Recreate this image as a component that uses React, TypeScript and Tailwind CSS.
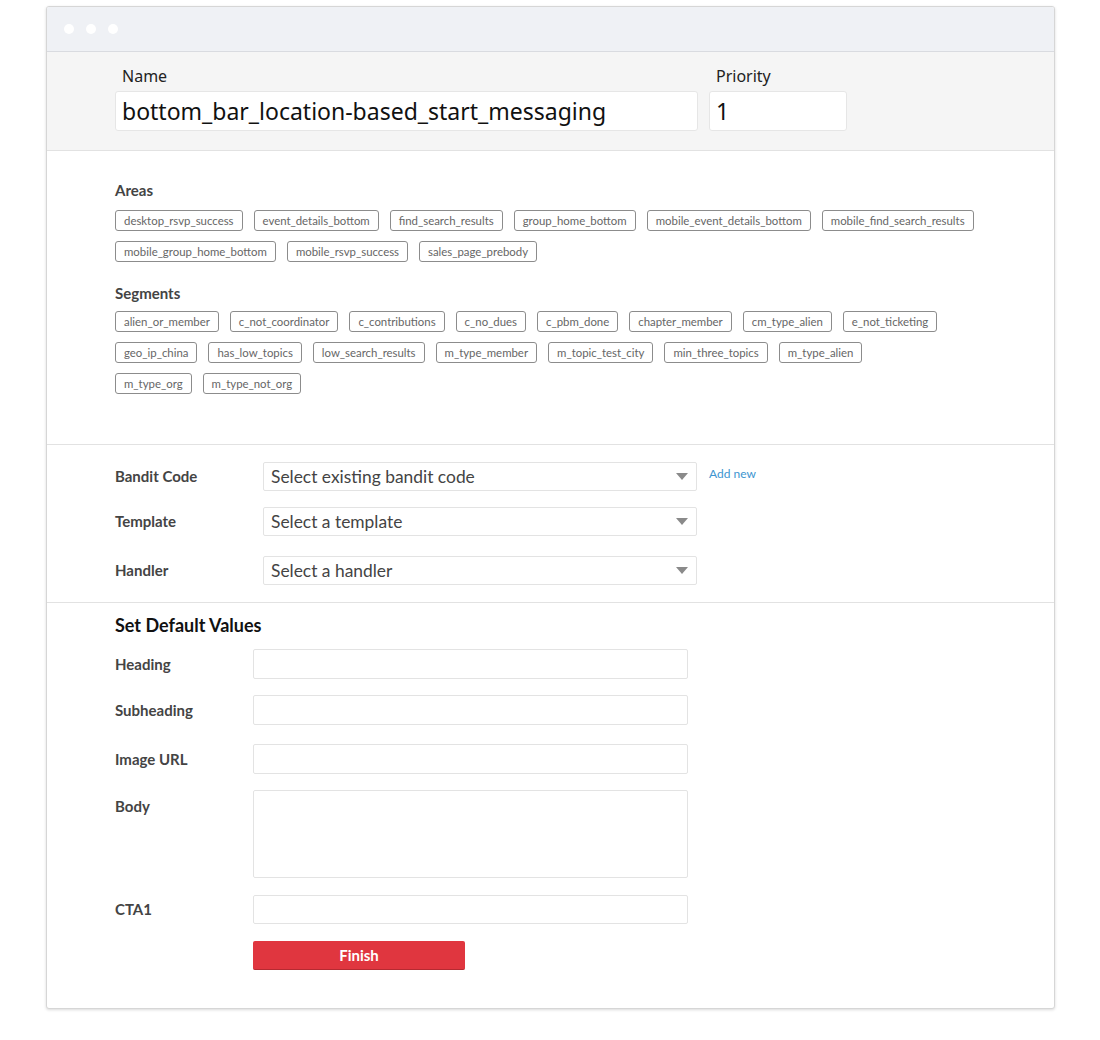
import React from "react";

const areasRows = [
  ["desktop_rsvp_success", "event_details_bottom", "find_search_results", "group_home_bottom", "mobile_event_details_bottom", "mobile_find_search_results"],
  ["mobile_group_home_bottom", "mobile_rsvp_success", "sales_page_prebody"],
];
const segRows = [
  ["alien_or_member", "c_not_coordinator", "c_contributions", "c_no_dues", "c_pbm_done", "chapter_member", "cm_type_alien", "e_not_ticketing"],
  ["geo_ip_china", "has_low_topics", "low_search_results", "m_type_member", "m_topic_test_city", "min_three_topics", "m_type_alien"],
  ["m_type_org", "m_type_not_org"],
];

function Tag({ t }: { t: string }) {
  return (
    <span className="h-[21px] px-[8px] flex items-center border border-[#8c8c8c] rounded-[3px] text-[11.4px] text-[#666] font-['Lato',sans-serif] leading-none whitespace-nowrap">
      {t}
    </span>
  );
}

function Select({ text }: { text: string }) {
  return (
    <div className="w-[434px] h-[29px] border border-[#e3e3e3] rounded-[2px] bg-white flex items-center justify-between pl-[7px] pr-[8px]">
      <span className="text-[17.4px] text-[#444] font-['Lato',sans-serif] leading-none">{text}</span>
      <svg width="12" height="8" viewBox="0 0 12 8"><path d="M0 0 L12 0 L6 7 Z" fill="#8a8a8a" /></svg>
    </div>
  );
}

function Field({ label, h = 29, top = false }: { label: string; h?: number; top?: boolean }) {
  return (
    <div className={`flex ${top ? "items-start" : "items-center"}`}>
      <div className={`w-[138px] text-[15px] font-bold text-[#444] font-['Lato',sans-serif] ${top ? "pt-[5px]" : ""}`}>{label}</div>
      <div className="w-[435px] border border-[#e3e3e3] rounded-[2px] bg-white" style={{ height: h }} />
    </div>
  );
}

export default function App() {
  return (
    <div className="w-[1100px] h-[1040px] bg-white pt-[6px] pl-[46px]">
      <div className="w-[1009px] border border-[#d6d6d6] rounded-[3px] shadow-[0_1px_3px_rgba(0,0,0,0.15)] bg-white overflow-hidden">
        {/* title bar */}
        <div className="h-[45px] bg-[#eff1f5] flex items-center gap-[12px] pl-[17px] border-b border-[#d9dbe0]">
          <span className="w-[10px] h-[10px] rounded-full bg-white" />
          <span className="w-[10px] h-[10px] rounded-full bg-white" />
          <span className="w-[10px] h-[10px] rounded-full bg-white" />
        </div>
        {/* header */}
        <div className="h-[99px] bg-[#f5f5f5] border-b border-[#e2e2e2] pl-[68px] pt-[13px] flex gap-[11px] font-['Noto_Sans',sans-serif]">
          <div className="flex flex-col">
            <div className="pl-[7px] text-[16px] text-[#222] leading-[22px] mb-[4px]">Name</div>
            <div className="w-[583px] h-[40px] bg-white border border-[#e6e6e6] rounded-[3px] flex items-center pl-[6px] text-[23px] text-[#111] leading-none">
              bottom_bar_location-based_start_messaging
            </div>
          </div>
          <div className="flex flex-col">
            <div className="pl-[7px] text-[16px] text-[#222] leading-[22px] mb-[4px]">Priority</div>
            <div className="w-[138px] h-[40px] bg-white border border-[#e6e6e6] rounded-[3px] flex items-center pl-[6px] text-[23px] text-[#111] leading-none">1</div>
          </div>
        </div>
        {/* areas & segments */}
        <div className="pl-[68px] pt-[29px] pb-[50px] border-b border-[#e2e2e2] font-['Lato',sans-serif]">
          <div className="text-[15px] font-bold text-[#444] leading-[20px] mb-[10px]">Areas</div>
          <div className="flex flex-col gap-[10px]">
            {areasRows.map((r, i) => (
              <div key={i} className="flex gap-[11px]">{r.map((t) => <Tag key={t} t={t} />)}</div>
            ))}
          </div>
          <div className="text-[15px] font-bold text-[#444] leading-[20px] mt-[21px] mb-[8px]">Segments</div>
          <div className="flex flex-col gap-[10px]">
            {segRows.map((r, i) => (
              <div key={i} className="flex gap-[11px]">{r.map((t) => <Tag key={t} t={t} />)}</div>
            ))}
          </div>
        </div>
        {/* selects */}
        <div className="pl-[68px] pt-[17px] pb-[17px] border-b border-[#e2e2e2] flex flex-col font-['Lato',sans-serif]">
          <div className="flex items-center">
            <div className="w-[148px] text-[15px] font-bold text-[#444]">Bandit Code</div>
            <Select text="Select existing bandit code" />
            <a className="ml-[12px] -mt-[6px] text-[12px] text-[#3d95d0]">Add new</a>
          </div>
          <div className="flex items-center mt-[16px]">
            <div className="w-[148px] text-[15px] font-bold text-[#444]">Template</div>
            <Select text="Select a template" />
          </div>
          <div className="flex items-center mt-[20px]">
            <div className="w-[148px] text-[15px] font-bold text-[#444]">Handler</div>
            <Select text="Select a handler" />
          </div>
        </div>
        {/* defaults */}
        <div className="pl-[68px] pt-[11px] pb-[38px] font-['Lato',sans-serif]">
          <div className="text-[18px] font-bold text-[#111] leading-[22px] mb-[13px]">Set Default Values</div>
          <div className="flex flex-col">
            <Field label="Heading" h={30} />
            <div className="h-[16px]" />
            <Field label="Subheading" h={30} />
            <div className="h-[19px]" />
            <Field label="Image URL" h={30} />
            <div className="h-[16px]" />
            <Field label="Body" h={88} top />
            <div className="h-[17px]" />
            <Field label="CTA1" />
            <div className="flex mt-[17px]">
              <div className="w-[138px]" />
              <button className="w-[212px] h-[29px] bg-[#e0363f] rounded-[2px] border-b border-[#b52a31] text-white text-[15px] font-bold">Finish</button>
            </div>
          </div>
        </div>
      </div>
    </div>
  );
}
